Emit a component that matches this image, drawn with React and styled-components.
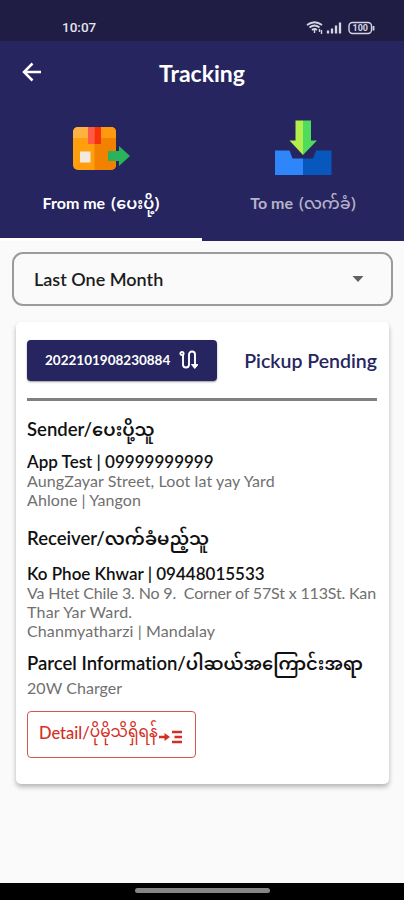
import styled, { createGlobalStyle } from 'styled-components';

const GlobalStyle = createGlobalStyle`
	* {
		box-sizing: border-box;
	}
	body {
		margin: 0;
		background-color: #fafafa;
	}
`;

const Screen = styled.div`
	width: 404px;
	height: 900px;
	display: flex;
	flex-direction: column;
	overflow: hidden;
	background-color: #fafafa;
	font-family: Lato, 'Noto Sans Myanmar', 'Noto Sans', sans-serif;
	font-variant-ligatures: no-common-ligatures;
`;

/* status bar */
const StatusBar = styled.div`
	height: 41px;
	flex: none;
	display: flex;
	align-items: center;
	justify-content: space-between;
	padding: 14px 28px 0 62px;
	background-color: #1f1d43;
	color: #e4e3ee;
`;
const Clock = styled.div`
	margin-top: -1px;
	font-family: Roboto, sans-serif;
	font-size: 13.5px;
	font-weight: 500;
`;
const StatusIcons = styled.svg`
	display: block;
	width: 70px;
	height: 16px;
`;

/* header with the two tabs */
const Header = styled.header`
	height: 200px;
	flex: none;
	display: flex;
	flex-direction: column;
	background-color: #272560;
	color: #ffffff;
`;
const TitleBar = styled.div`
	height: 64px;
	display: grid;
	grid-template-columns: 64px 1fr 64px;
	align-items: center;
	text-align: center;
`;
const BackIcon = styled.svg`
	width: 24px;
	height: 24px;
	margin: -2px 0 0 20px;
	display: block;
`;
const Title = styled.h1`
	margin: 0;
	font-size: 23px;
	line-height: 28px;
	font-weight: 700;
`;
const Tabs = styled.nav`
	flex: 1;
	display: grid;
	grid-template-columns: 1fr 1fr;
`;
const Tab = styled.div`
	display: flex;
	flex-direction: column;
	align-items: center;
	padding-top: 14px;
	color: ${(props) => (props.$active ? '#ffffff' : '#b4b3c9')};
	border-bottom: 3px solid ${(props) => (props.$active ? '#ffffff' : '#272560')};
`;
const TabIcon = styled.svg`
	width: 60px;
	height: 60px;
	display: block;
`;
const TabLabel = styled.div`
	height: 24px;
	margin-top: 12px;
	display: flex;
	align-items: baseline;
	gap: 2px;
	font-size: 16px;
	line-height: 24px;
	font-weight: 700;
	white-space: pre;
`;
const Burmese = styled.span`
	font-family: 'Noto Sans Myanmar', Lato, sans-serif;
	font-size: ${(props) => props.$size || '17.9px'};
	font-weight: ${(props) => props.$weight || 600};
	line-height: 1;
`;

/* content */
const Content = styled.main`
	flex: 1;
	padding: 11px 11px 0 12px;
`;
const Dropdown = styled.div`
	height: 54px;
	display: flex;
	align-items: center;
	justify-content: space-between;
	padding: 0 27px 1px 20px;
	border: 2px solid #9b9b9b;
	border-radius: 11px;
	color: #1c1c1c;
	font-size: 18px;
	font-weight: 600;
`;
const Caret = styled.svg`
	width: 12px;
	height: 6px;
`;
const Card = styled.section`
	height: 462px;
	margin: 16px 4px 0;
	padding: 18px 12px 0 11px;
	border-radius: 5px;
	background-color: #ffffff;
	box-shadow: 0 3px 5px rgba(0, 0, 0, 0.28);
`;
const CardHead = styled.div`
	display: flex;
	align-items: center;
	justify-content: space-between;
	height: 61px;
	padding-bottom: 18px;
	border-bottom: 3px solid #808080;
`;
const TrackingButton = styled.button`
	width: 190px;
	height: 41px;
	display: flex;
	align-items: center;
	gap: 9px;
	padding: 0 0 0 18px;
	border: 0;
	border-radius: 4px;
	background-color: #272560;
	box-shadow: 0 1px 2px rgba(0, 0, 0, 0.4);
	color: #ffffff;
	font-family: inherit;
	font-size: 13.5px;
	font-weight: 700;
`;
const RouteIcon = styled.svg`
	width: 19px;
	height: 20px;
`;
const Status = styled.div`
	color: #272560;
	font-size: 19.5px;
	font-weight: 600;
	white-space: nowrap;
`;
const Heading = styled.h2`
	height: 24px;
	margin: ${(props) => props.$top} 0 0;
	font-size: 18.5px;
	line-height: 24px;
	font-weight: 600;
	color: #111111;
	white-space: nowrap;
`;
const Person = styled.div`
	height: 20px;
	margin-top: ${(props) => props.$top};
	font-size: 17px;
	line-height: 22px;
	font-weight: 600;
	color: #111111;
	white-space: nowrap;
`;
const Line = styled.div`
	height: 19.3px;
	margin-top: ${(props) => props.$top || '0'};
	font-size: 16px;
	line-height: 19.3px;
	letter-spacing: ${(props) => props.$spacing || '0'};
	color: #707070;
	white-space: pre;
`;
const DetailButton = styled.button`
	width: 169px;
	height: 47px;
	display: flex;
	align-items: center;
	margin-top: 13px;
	padding: 0 0 2px 11px;
	border: 1px solid #d9534f;
	border-radius: 4px;
	background: none;
	color: #d32f24;
	font-family: inherit;
	font-size: 16.5px;
	font-weight: 500;
	white-space: nowrap;
`;
const DetailIcon = styled.svg`
	width: 24px;
	height: 14px;
	margin: 7px 0 0 1px;
	flex: none;
`;

const NavBar = styled.div`
	height: 17px;
	flex: none;
	display: flex;
	justify-content: center;
	padding-top: 5px;
	background-color: #000000;
`;
const Handle = styled.div`
	width: 135px;
	height: 5px;
	border-radius: 3px;
	background-color: #858585;
`;

const App = () => {
	return (
		<>
			<GlobalStyle />
			<Screen>
				<StatusBar>
					<Clock>10:07</Clock>
					<StatusIcons viewBox="0 0 70 16" fill="none" stroke="#d5d4e3">
						<path d="M1 5Q8.500 -0.500 16 5M3.500 7.500Q8.500 3.500 13.500 7.500M6 10Q8.500 8 11 10" strokeWidth="1.8" />
						<path d="M8.500 10v3M13.500 9v3M15.500 10v4" strokeWidth="1.4" />
						<path d="M22 13.500v-3M26 13.500v-5M30 13.500v-8M34 13.500v-11" strokeWidth="2.3" />
						<rect x="43" y="2.500" width="22.500" height="11" rx="3.500" strokeWidth="1.4" />
						<path d="M67.500 6v4.500" strokeWidth="1.8" />
						<text x="54.300" y="11.200" textAnchor="middle" fontFamily="Roboto" fontSize="9" fontWeight="700" fill="#d5d4e3" stroke="none">
							100
						</text>
					</StatusIcons>
				</StatusBar>
				<Header>
					<TitleBar>
						<BackIcon viewBox="0 0 24 24" fill="none" stroke="#ffffff" strokeWidth="2.5">
							<path d="M21 12H4.500M12.500 3.500L4 12l8.500 8.500" />
						</BackIcon>
						<Title>Tracking</Title>
					</TitleBar>
					<Tabs>
						<Tab $active>
							<TabIcon viewBox="0 0 60 60">
								<rect x="2" y="8" width="43" height="43" rx="5" fill="#ff9f0e" />
								<path d="M23.500 8H40a5 5 0 0 1 5 5v33a5 5 0 0 1-5 5H23.500z" fill="#f28100" />
								<path d="M7 8h16.500v11H2v-6a5 5 0 0 1 5-5z" fill="#ffb142" />
								<path d="M23.500 8H40a5 5 0 0 1 5 5v6H23.500z" fill="#ff9a10" />
								<path d="M17 8h6.500v17H17z" fill="#ff5a49" />
								<path d="M23.500 8H30v17h-6.500z" fill="#f9300c" />
								<rect x="9" y="32.500" width="10.500" height="11" fill="#f3e9dc" />
								<path d="M37 32h11v-5l11 10L48 47v-5H37z" fill="#29b45c" />
							</TabIcon>
							<TabLabel>
								From me <Burmese $size="16px">(ပေးပို့)</Burmese>
							</TabLabel>
						</Tab>
						<Tab>
							<TabIcon viewBox="0 0 60 60">
								<path d="M2 31.500h14.500l3 8H30V56H2z" fill="#2f86fb" />
								<path d="M30 39.500h10l3-8h15.500V56H30z" fill="#0857bd" />
								<path d="M22.500 1.500H30V36L16.500 21.500h6z" fill="#b2ee4c" />
								<path d="M30 1.500h8v20h6L30 36z" fill="#4fdc5c" />
							</TabIcon>
							<TabLabel>
								To me <Burmese $size="16px" $weight={500}>(လက်ခံ)</Burmese>
							</TabLabel>
						</Tab>
					</Tabs>
				</Header>
				<Content>
					<Dropdown>
						Last One Month
						<Caret viewBox="0 0 12 6">
							<path d="M0.500 0h11L6 6z" fill="#616161" />
						</Caret>
					</Dropdown>
					<Card>
						<CardHead>
							<TrackingButton>
								2022101908230884
								<RouteIcon viewBox="0 0 19 20" fill="none" stroke="#ffffff" strokeWidth="1.900">
									<circle cx="3" cy="3.500" r="1.600" />
									<path d="M4 5v9.500a3 3 0 0 0 6 0V4.500a3 3 0 0 1 6 0V15" />
									<path d="M12.500 14.500h6.500l-3.200 4z" fill="#ffffff" strokeWidth="1" />
								</RouteIcon>
							</TrackingButton>
							<Status>Pickup Pending</Status>
						</CardHead>
						<Heading $top="16px">
							Sender/<Burmese>ပေးပို့သူ</Burmese>
						</Heading>
						<Person $top="10px">App Test | 09999999999</Person>
						<Line $spacing="0.11px">AungZayar Street, Loot lat yay Yard</Line>
						<Line $spacing="0.08px">Ahlone | Yangon</Line>
						<Heading $top="16px">
							Receiver/<Burmese>လက်ခံမည့်သူ</Burmese>
						</Heading>
						<Person $top="13px">Ko Phoe Khwar | 09448015533</Person>
						<Line $spacing="-0.17px">Va Htet Chile 3. No 9.  Corner of 57St x 113St. Kan</Line>
						<Line $spacing="0.2px">Thar Yar Ward.</Line>
						<Line $spacing="0.12px">Chanmyatharzi | Mandalay</Line>
						<Heading $top="11px">
							Parcel Information/<Burmese>ပါဆယ်အကြောင်းအရာ</Burmese>
						</Heading>
						<Line $top="3px" $spacing="0.05px">20W Charger</Line>
						<DetailButton>
							Detail/<Burmese $size="15.4px" $weight={400}>ပိုမိုသိရှိရန်</Burmese>
							<DetailIcon viewBox="0 0 24 14" fill="none" stroke="#d32f24" strokeWidth="2.4">
								<path d="M0 7h8M13 2h10M15.500 7H23M13 12h10" />
								<path d="M5.500 3v8l5.500-4z" fill="#d32f24" stroke="none" />
							</DetailIcon>
						</DetailButton>
					</Card>
				</Content>
				<NavBar>
					<Handle />
				</NavBar>
			</Screen>
		</>
	);
};

export default App;
